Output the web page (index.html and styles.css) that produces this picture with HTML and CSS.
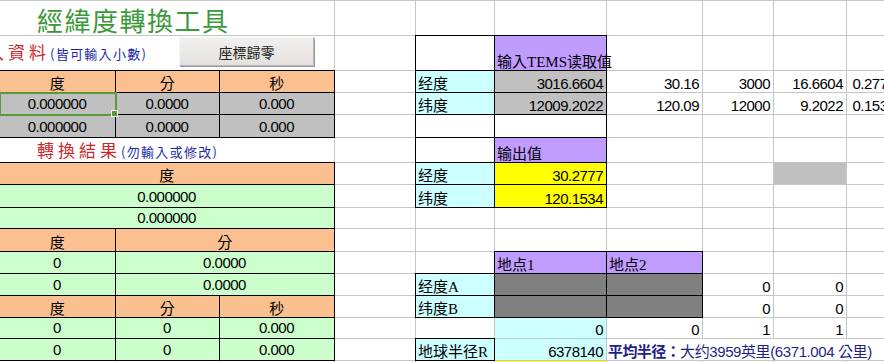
FILE: index.html
```html
<!DOCTYPE html>
<html lang="zh-Hant">
<head>
  <meta charset="UTF-8" />
  <title>經緯度轉換工具</title>
  <link rel="stylesheet" href="styles.css">
</head>
<body>
  <table class="sheet">
    <colgroup>
      <col class="ca"><col class="cb"><col class="cc"><col class="cd"><col class="ce">
      <col class="cf"><col class="cg"><col class="ch"><col class="ci"><col class="cj">
    </colgroup>
    <tr class="tall">
      <td colspan="3" class="title">經緯度轉換工具</td>
      <td></td><td></td><td></td><td></td><td></td><td></td><td></td>
    </tr>
    <tr class="tall">
      <td colspan="3" class="note first-note"><span class="red">輸入資料</span><span class="blue">(皆可輸入小數)</span></td>
      <td></td>
      <td class="box"></td>
      <td class="box pur sc">输入TEMS读取值</td>
      <td></td><td></td><td></td><td></td>
    </tr>
    <tr>
      <td class="box hd">度</td><td class="box hd">分</td><td class="box hd">秒</td>
      <td></td>
      <td class="box lbl sc">经度</td>
      <td class="box gry num">3016.6604</td>
      <td class="num">30.16</td><td class="num">3000</td><td class="num">16.6604</td><td class="num">0.277673</td>
    </tr>
    <tr>
      <td class="box gry val sel">0.000000</td><td class="box gry val">0.0000</td><td class="box gry val">0.000</td>
      <td></td>
      <td class="box lbl sc">纬度</td>
      <td class="box gry num">12009.2022</td>
      <td class="num">120.09</td><td class="num">12000</td><td class="num">9.2022</td><td class="num">0.153370</td>
    </tr>
    <tr class="h23">
      <td class="box gry val">0.000000</td><td class="box gry val">0.0000</td><td class="box gry val">0.000</td>
      <td></td>
      <td class="box"></td><td class="box"></td>
      <td></td><td></td><td></td><td></td>
    </tr>
    <tr class="h25">
      <td colspan="3" class="note second-note"><span class="red">轉換結果</span><span class="blue">(勿輸入或修改)</span></td>
      <td></td>
      <td class="box"></td>
      <td class="box pur sc">输出值</td>
      <td></td><td></td><td></td><td></td>
    </tr>
    <tr>
      <td colspan="3" class="box hd">度</td>
      <td></td>
      <td class="box lbl sc">经度</td>
      <td class="box yel num">30.2777</td>
      <td></td><td></td><td class="gry"></td><td></td>
    </tr>
    <tr class="h23">
      <td colspan="3" class="box grn val">0.000000</td>
      <td></td>
      <td class="box lbl sc">纬度</td>
      <td class="box yel num">120.1534</td>
      <td></td><td></td><td></td><td></td>
    </tr>
    <tr class="h21">
      <td colspan="3" class="box grn val">0.000000</td>
      <td></td><td></td><td></td><td></td><td></td><td></td><td></td>
    </tr>
    <tr class="h23">
      <td class="box hd">度</td><td colspan="2" class="box hd">分</td>
      <td></td><td></td><td></td><td></td><td></td><td></td><td></td>
    </tr>
    <tr>
      <td class="box grn val">0</td><td colspan="2" class="box grn val">0.0000</td>
      <td></td><td></td>
      <td class="box pur sc">地点1</td>
      <td class="box pur sc">地点2</td>
      <td></td><td></td><td></td>
    </tr>
    <tr>
      <td class="box grn val">0</td><td colspan="2" class="box grn val">0.0000</td>
      <td></td>
      <td class="box lbl sc">经度A</td>
      <td class="box dk"></td><td class="box dk"></td>
      <td class="num">0</td><td class="num">0</td><td></td>
    </tr>
    <tr>
      <td class="box hd">度</td><td class="box hd">分</td><td class="box hd">秒</td>
      <td></td>
      <td class="box lbl sc">纬度B</td>
      <td class="box dk"></td><td class="box dk"></td>
      <td class="num">0</td><td class="num">0</td><td></td>
    </tr>
    <tr class="h21">
      <td class="box grn val">0</td><td class="box grn val">0</td><td class="box grn val">0.000</td>
      <td></td><td></td>
      <td class="cy num">0</td>
      <td class="num">0</td><td class="num">1</td><td class="num">1</td><td></td>
    </tr>
    <tr>
      <td class="box grn val">0</td><td class="box grn val">0</td><td class="box grn val">0.000</td>
      <td></td>
      <td class="box lbl sc">地球半径R</td>
      <td class="cy num">6378140</td>
      <td colspan="4" class="avg"><b>平均半径：</b>大约3959英里(6371.004 公里)</td>
    </tr>
    <tr>
      <td></td><td></td><td></td><td></td><td></td>
      <td class="yel"></td>
      <td></td><td></td><td></td><td></td>
    </tr>
  </table>

  <button class="reset">座標歸零</button>
</body>
</html>
```

FILE: styles.css
```css
body {
  margin: 0;
  background: #fff;
  color: #000;
  overflow: hidden;
  position: relative;
  font-family: "Liberation Sans", "Noto Sans CJK TC", sans-serif;
  font-size: 15px;
}

.sheet {
  border-collapse: collapse;
  table-layout: fixed;
  width: 915px;
  margin-left: -1px;
}

.sheet col {
  border-left: 1px solid #c6c6c6;
  border-right: 1px solid #c6c6c6;
}

.ca { width: 116px; }
.cb { width: 104px; }
.cc { width: 115px; }
.cd { width: 81px; }
.ce { width: 79px; }
.cf { width: 112px; }
.cg { width: 96px; }
.ch { width: 71px; }
.ci { width: 73px; }
.cj { width: 68px; }

.sheet tr {
  height: 22px;
  border-top: 1px solid #c6c6c6;
  border-bottom: 1px solid #c6c6c6;
}

.sheet tr.tall { height: 35px; }
.sheet tr.h21 { height: 21px; }
.sheet tr.h23 { height: 23px; }
.sheet tr.h25 { height: 25px; }

.sheet td {
  padding: 0 3px 0 2px;
  white-space: nowrap;
  vertical-align: bottom;
  line-height: 17px;
  letter-spacing: -0.5px;
}

/* cell styles */
.sheet .box { border: 1px solid #000; }
.sheet .hd { background: #fac090; text-align: center; }
.sheet .gry { background: #c0c0c0; }
.sheet .grn { background: #ccffcc; }
.sheet .lbl { background: #ccffff; }
.sheet .cy { background: #ccffff; }
.sheet .pur { background: #c09cff; }
.sheet .yel { background: #ffff00; }
.sheet .dk { background: #808080; }

.sheet .val {
  text-align: center;
  padding-bottom: 2px;
}

.sheet .num { text-align: right; }

.sheet .sc {
  font-family: "Liberation Serif", "Noto Sans CJK SC", serif;
  letter-spacing: 0;
  line-height: 16px;
}

.sheet .sel {
  position: relative;
  outline: 2px solid #5a9a3a;
  outline-offset: -1px;
}

.sel::after {
  content: "";
  position: absolute;
  right: -3px;
  bottom: -3px;
  width: 5px;
  height: 5px;
  background: #5a9a3a;
  border: 1px solid #fff;
}

/* headings */
.sheet .title {
  padding: 2px 0 0 37px;
  vertical-align: middle;
  font-family: "Noto Sans CJK TC", sans-serif;
  font-size: 26px;
  letter-spacing: 1.5px;
  color: #3a9a3a;
}

.sheet .note {
  font-family: "Noto Sans CJK TC", sans-serif;
  letter-spacing: 0;
  line-height: 20px;
}

.sheet .first-note {
  padding: 0 0 6px 0;
  text-indent: -34px;
}

.sheet .second-note { padding: 0 0 0 37px; }

.red {
  color: #c8282c;
  font-size: 17px;
  letter-spacing: 4px;
}

.blue {
  color: #1c2aa8;
  font-size: 13px;
  letter-spacing: 1.3px;
}

.sheet .avg {
  padding-left: 1px;
  font-family: "Liberation Sans", "Noto Sans CJK SC", sans-serif;
  color: #1f1f8a;
  letter-spacing: -0.4px;
}

.avg b {
  font-family: "Noto Sans CJK SC", sans-serif;
  letter-spacing: -0.6px;
}

.reset {
  position: absolute;
  left: 179px;
  top: 37px;
  width: 135px;
  height: 29px;
  background: linear-gradient(#f2f0ef, #e4e1df);
  border: 1px solid #b8b8b8;
  border-top-color: #f4f4f4;
  border-left-color: #f4f4f4;
  box-shadow: 1px 1px 0 #9a9a9a;
  font-family: "Noto Sans CJK TC", sans-serif;
  font-size: 14px;
  color: #222;
  padding: 0;
}
```
